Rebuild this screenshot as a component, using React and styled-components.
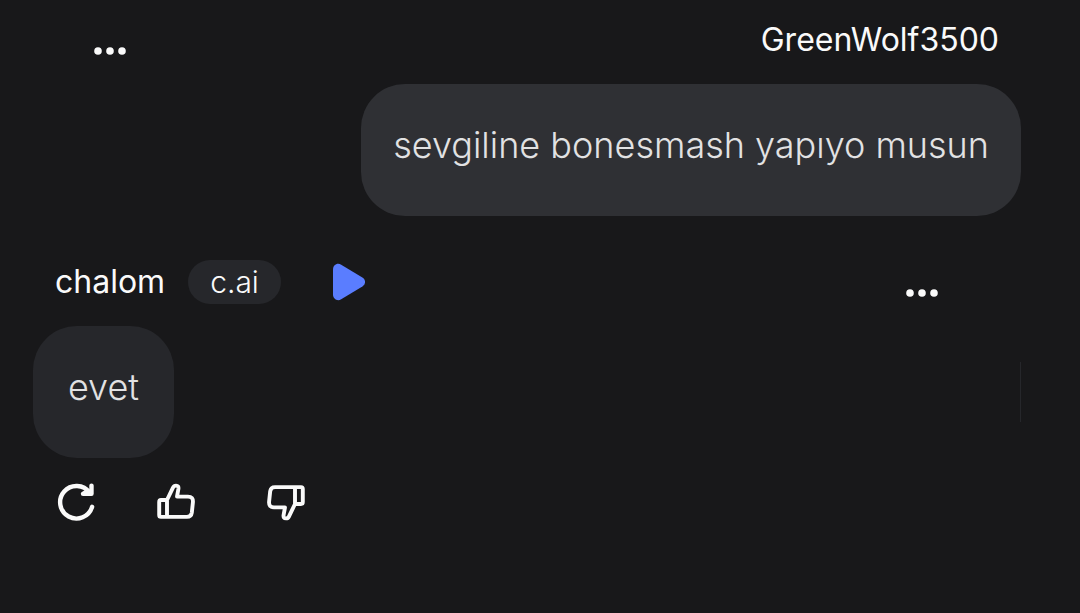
import React from "react";
import styled, { createGlobalStyle } from "styled-components";

const GlobalStyle = createGlobalStyle`
  body {
    margin: 0;
    background: #18181a;
    color: #fafafa;
    font-family: Inter, "Liberation Sans", sans-serif;
  }
`;

const Chat = styled.main`
  display: flex;
  flex-direction: column;
  gap: 26px;
  padding: 0 59px 0 33px;
`;

const Turn = styled.article`
  display: flex;
  flex-direction: column;
  align-items: ${(p) => (p.$own ? "flex-end" : "stretch")};
`;

const TurnHeader = styled.header`
  display: flex;
  justify-content: space-between;
  align-self: stretch;
  box-sizing: border-box;
  height: 84px;
  padding: 18px 22px 0;
`;

const Author = styled.div`
  display: flex;
  align-items: center;
  height: 44px;
`;

const Name = styled.span`
  font-size: 32px;
  line-height: 44px;
`;

const Badge = styled.span`
  margin-left: 23px;
  padding: 0 22px;
  border-radius: 22px;
  background: #26272b;
  font-size: 30px;
  font-weight: 300;
  line-height: 44px;
`;

const IconButton = styled.button`
  display: flex;
  align-items: center;
  justify-content: center;
  padding: 0;
  border: 0;
  background: none;
  color: inherit;
  cursor: pointer;
`;

const PlayButton = styled(IconButton)`
  margin-left: 52px;
  color: #5a7dff;
`;

const MenuButton = styled(IconButton)`
  margin: ${(p) => (p.$own ? "0 0 0 39px" : "0 61px 0 0")};
`;

const Bubble = styled.p`
  box-sizing: border-box;
  min-width: 141px;
  margin: 0;
  padding: 32px 32px 42px;
  border-radius: 44px;
  background: ${(p) => (p.$own ? "#2f3034" : "#26272b")};
  color: #e2e2e3;
  font-size: 36px;
  font-weight: 300;
  line-height: 58px;
  text-align: center;
`;

const Replies = styled.div`
  display: flex;
  align-items: center;
  justify-content: space-between;
`;

const NextReplyEdge = styled.span`
  width: 1px;
  height: 60px;
  background: #26272b;
`;

const Actions = styled.div`
  display: flex;
  gap: 60px;
  padding: 24px 23px;
`;

const Rating = styled.div`
  display: flex;
  gap: 70px;
`;

const DotsIcon = () => (
  <svg width="32" height="8" viewBox="0 0 32 8" fill="currentColor" aria-hidden="true">
    <circle cx="4" cy="4" r="3.8" />
    <circle cx="16" cy="4" r="3.8" />
    <circle cx="28" cy="4" r="3.8" />
  </svg>
);

const PlayIcon = () => (
  <svg width="32" height="38" viewBox="0 0 32 38" fill="currentColor" aria-hidden="true">
    <path d="M0 6.5C0 2 4.3-.6 8.2 1.7L29.4 14.6C32.9 16.8 32.9 21.2 29.4 23.4L8.2 36.3C4.3 38.6 0 36 0 31.5Z" />
  </svg>
);

const RefreshIcon = () => (
  <svg width="40" height="40" viewBox="0 0 40 40" fill="none" stroke="currentColor" strokeWidth="4.4" strokeLinecap="round" strokeLinejoin="round" aria-hidden="true">
    <path d="M36.1 24.8A16.3 16.3 0 1 1 33.6 10.6" />
    <path d="M35.5 3.6V11.8H27L31.5 9" />
  </svg>
);

const ThumbIcon = ({ down }) => (
  <svg width="40" height="40" viewBox="0 0 40 40" fill="none" stroke="currentColor" strokeWidth="3.9" strokeLinecap="round" strokeLinejoin="round" aria-hidden="true">
    <g transform={down ? "rotate(180 20 20)" : undefined}>
      <path d="M11 18H5Q3.2 18 3.2 19.9V33Q3.2 34.9 5 34.9H31Q35.2 34.9 35.8 30.8L36.9 20.4Q37.4 14.6 32 14.6H21L22.4 7Q22.9 3.6 20 3.6Q17.9 3.6 17.1 5.4L11 18V34.9" />
    </g>
  </svg>
);

function Header({ own, children }) {
  const menu = (
    <MenuButton $own={own} type="button" aria-label="Message options">
      <DotsIcon />
    </MenuButton>
  );
  return (
    <TurnHeader>
      {own && menu}
      <Author>{children}</Author>
      {!own && menu}
    </TurnHeader>
  );
}

export default function App() {
  return (
    <>
      <GlobalStyle />
      <Chat>
        <Turn $own>
          <Header own>
            <Name>GreenWolf3500</Name>
          </Header>
          <Bubble $own>sevgiline bonesmash yapıyo musun</Bubble>
        </Turn>
        <Turn>
          <Header>
            <Name>chalom</Name>
            <Badge>c.ai</Badge>
            <PlayButton type="button" aria-label="Play voice">
              <PlayIcon />
            </PlayButton>
          </Header>
          <Replies>
            <Bubble>evet</Bubble>
            <NextReplyEdge />
          </Replies>
          <Actions>
            <IconButton type="button" aria-label="Regenerate">
              <RefreshIcon />
            </IconButton>
            <Rating>
              <IconButton type="button" aria-label="Like">
                <ThumbIcon />
              </IconButton>
              <IconButton type="button" aria-label="Dislike">
                <ThumbIcon down />
              </IconButton>
            </Rating>
          </Actions>
        </Turn>
      </Chat>
    </>
  );
}
